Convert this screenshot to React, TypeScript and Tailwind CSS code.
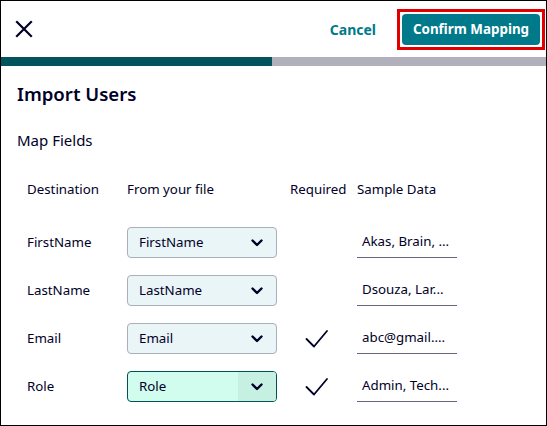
import React from "react";

const Chevron = () => (
  <svg width="12" height="8" viewBox="0 0 12 8" fill="none">
    <path d="M1.5 1.5 L6 6 L10.5 1.5" stroke="#000028" strokeWidth="2.4" strokeLinecap="round" strokeLinejoin="round" />
  </svg>
);

const Check = () => (
  <svg width="24" height="20" viewBox="0 0 24 20" fill="none">
    <path d="M1.5 10 L9 17.5 L22 2" stroke="#000028" strokeWidth="1.8" strokeLinecap="round" strokeLinejoin="round" />
  </svg>
);

type Row = { dest: string; file: string; required: boolean; sample: string; active?: boolean };

const rows: Row[] = [
  { dest: "FirstName", file: "FirstName", required: false, sample: "Akas, Brain, ..." },
  { dest: "LastName", file: "LastName", required: false, sample: "Dsouza, Lar..." },
  { dest: "Email", file: "Email", required: true, sample: "abc@gmail...." },
  { dest: "Role", file: "Role", required: true, sample: "Admin, Tech...", active: true },
];

export default function App() {
  return (
    <div
      className="w-[547px] h-[426px] border border-black bg-white flex flex-col text-[#000028]"
      style={{ fontFamily: '"Noto Sans", "Open Sans", sans-serif' }}
    >
      <div className="h-[56px] shrink-0 flex items-center justify-between pl-[14px] pr-[1px]">
        <svg width="18" height="18" viewBox="0 0 18 18" fill="none">
          <path d="M2 2 L16 16 M16 2 L2 16" stroke="#000028" strokeWidth="2.2" strokeLinecap="square" />
        </svg>
        <div className="flex items-center gap-[21px]">
          <span className="text-[14px] font-bold text-[#00798a]">Cancel</span>
          <div className="border-[3px] border-[#e00000] p-[2px]">
            <button className="h-[31px] w-[138px] rounded-[4px] bg-[#007a8a] text-white text-[13.4px] font-bold flex items-center justify-center">
              Confirm Mapping
            </button>
          </div>
        </div>
      </div>
      <div className="h-[9px] shrink-0 flex">
        <div className="w-[271px] bg-[#01545d]" />
        <div className="flex-1 bg-[#b1b1bd]" />
      </div>
      <div className="pl-[16px] pt-[14px]">
        <h1 className="text-[18.6px] font-semibold leading-[28px]">Import Users</h1>
        <div className="mt-[22px] text-[15px] leading-[20px]">Map Fields</div>
        <div className="ml-[10px] mt-[29px] text-[13.3px]">
          <div className="grid grid-cols-[100px_163px_67px_100px] items-center h-[22px]">
            <span>Destination</span>
            <span>From your file</span>
            <span>Required</span>
            <span>Sample Data</span>
          </div>
          <div className="mt-[26px] flex flex-col gap-[17px]">
            {rows.map((r) => (
              <div key={r.dest} className="grid grid-cols-[100px_163px_67px_100px] items-center h-[31px]">
                <span>{r.dest}</span>
                <div
                  className={
                    r.active
                      ? "w-[150px] h-[31px] rounded-[4px] border border-[#005159] bg-[#d1fdef] flex items-center overflow-hidden"
                      : "w-[150px] h-[31px] rounded-[4px] border border-[#a9b0ba] bg-[#eaf5f7] flex items-center overflow-hidden"
                  }
                >
                  <span className="flex-1 pl-[11px]">{r.file}</span>
                  <div
                    className={
                      r.active
                        ? "w-[38px] h-full flex items-center justify-center bg-[#c5f0e2]"
                        : "w-[38px] h-full flex items-center justify-center"
                    }
                  >
                    <Chevron />
                  </div>
                </div>
                <div className="pl-[15px] flex items-center">{r.required ? <Check /> : null}</div>
                <div className="h-[31px] border-b border-[#67677c] flex items-center pl-[5px] pb-[1px]">
                  <span className="whitespace-nowrap">{r.sample}</span>
                </div>
              </div>
            ))}
          </div>
        </div>
      </div>
    </div>
  );
}
